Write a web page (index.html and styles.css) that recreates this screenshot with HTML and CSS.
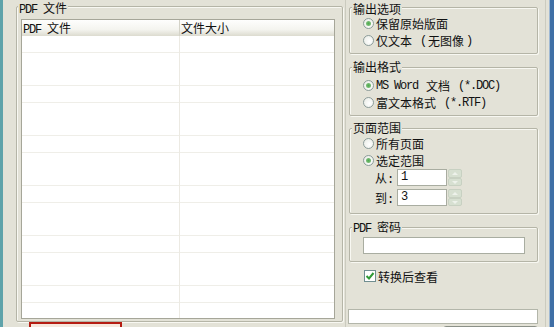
FILE: index.html
```html
<!DOCTYPE html>
<html lang="zh-CN">
<head>
  <meta charset="UTF-8">
  <link rel="stylesheet" href="styles.css">
  <title>PDF 转换</title>
</head>
<body>
  <div class="window">
    <div class="edge-left"></div>

    <div class="left-pane">
      <div class="group group-files">
        <div class="group-title"><span class="en">PDF </span>文件</div>
        <div class="listview">
          <div class="list-header">
            <div class="col col-name"><span class="en">PDF </span>文件</div>
            <div class="col col-size">文件大小</div>
          </div>
          <div class="list-body">
            <div class="col col-name"></div>
            <div class="col col-size"></div>
          </div>
        </div>
      </div>
      <div class="convert-btn"></div>
    </div>

    <div class="right-pane">
      <div class="group opt-group g-output">
        <div class="group-title">输出选项</div>
        <div class="radio-list">
          <div class="radio-row"><span class="radio checked"></span>保留原始版面</div>
          <div class="radio-row"><span class="radio"></span>仅文本<span class="en"> (</span>无图像<span class="en">)</span></div>
        </div>
      </div>

      <div class="group opt-group g-format">
        <div class="group-title">输出格式</div>
        <div class="radio-list">
          <div class="radio-row"><span class="radio checked"></span><span class="en">MS Word </span>文档<span class="en"> (*.DOC)</span></div>
          <div class="radio-row"><span class="radio"></span>富文本格式<span class="en"> (*.RTF)</span></div>
        </div>
      </div>

      <div class="group opt-group g-range">
        <div class="group-title">页面范围</div>
        <div class="radio-list">
          <div class="radio-row"><span class="radio"></span>所有页面</div>
          <div class="radio-row"><span class="radio checked"></span>选定范围</div>
        </div>
        <div class="range-row">
          <span class="range-label">从<span class="en">:</span></span>
          <div class="num-input">1</div>
          <div class="spin"><span class="up"></span><span class="down"></span></div>
        </div>
        <div class="range-row">
          <span class="range-label">到<span class="en">:</span></span>
          <div class="num-input">3</div>
          <div class="spin"><span class="up"></span><span class="down"></span></div>
        </div>
      </div>

      <div class="group opt-group g-password">
        <div class="group-title"><span class="en">PDF </span>密码</div>
        <div class="text-input"></div>
      </div>

      <div class="check-row">
        <span class="checkbox">
          <svg width="10" height="10" viewBox="0 0 10 10"><path d="M1.5 5 L4 7.5 L8.5 2" fill="none" stroke="#2f9a35" stroke-width="2"/></svg>
        </span>转换后查看
      </div>

      <div class="status-input"></div>
      <div class="action-btn"></div>
    </div>

    <div class="edge-right"></div>
  </div>
</body>
</html>
```

FILE: styles.css
```css
body {
  margin: 0;
  background: #e3e2d7;
  font-family: "Noto Sans CJK SC", sans-serif;
  font-size: 12px;
  color: #111;
}

.en {
  font-family: "Liberation Mono", "Noto Sans CJK SC", monospace;
  font-size: 12px;
  letter-spacing: -1.2px;
  white-space: pre;
}

.window {
  display: flex;
  height: 327px;
  overflow: hidden;
}

.edge-left {
  width: 3px;
  background: #5fa3aa;
}

.edge-right {
  width: 8px;
  background: linear-gradient(to right, #e3e2d7 0, #e3e2d7 3px, #9fb9d4 3px, #9fb9d4 4px, #3f6fa6 4px);
}

/* group boxes */
.group {
  flex-shrink: 0;
  border: 1px solid #b5b5a7;
  border-radius: 2px;
  box-shadow: inset 1px 1px 0 #f8f8f2, 1px 1px 0 #f8f8f2;
  box-sizing: border-box;
}

.group-title {
  width: max-content;
  margin-top: -7px;
  padding: 0 1px;
  line-height: 12px;
  background: #e3e2d7;
}

/* left side: file list */
.left-pane {
  width: 342px;
  padding: 6px 2px 0 13px;
  box-sizing: border-box;
}

.group-files {
  height: 316px;
  display: flex;
  flex-direction: column;
  padding: 0 7px 2px 4px;
}

.group-files .group-title {
  margin: -5px 0 0 -3px;
}

.listview {
  flex: 1;
  margin-top: 3px;
  border: 1px solid #a6a699;
  background: #fff;
  display: flex;
  flex-direction: column;
}

.list-header {
  display: flex;
  height: 16px;
  background: linear-gradient(#fefefd, #f4f4ef 60%, #dcdbcf);
}

.list-header .col {
  line-height: 16px;
  padding-left: 1px;
}

.list-header .col-name {
  border-right-color: #d4d3c8;
}

.col-name {
  width: 158px;
  box-sizing: border-box;
  border-right: 1px solid #eceae3;
}

.col-size {
  flex: 1;
}

.list-body {
  flex: 1;
  display: flex;
  background: repeating-linear-gradient(#fff 0, #fff 16px, #efeee8 16px, #efeee8 16.67px);
}

.convert-btn {
  width: 93px;
  height: 20px;
  margin: 0 0 0 13px;
  border: 2px solid #b51c12;
  background: #f6e8de;
  box-sizing: border-box;
}

/* right side: options */
.right-pane {
  width: 201px;
  border-left: 1px solid #cbcbbf;
  border-right: 1px solid #cbcbbf;
  padding: 0 7px 0 3px;
  box-sizing: border-box;
  display: flex;
  flex-direction: column;
}

.right-pane > div {
  flex-shrink: 0;
}

.opt-group {
  padding: 0 0 4px 13px;
}

.opt-group .group-title {
  margin-left: -11px;
}

.g-output {
  margin-top: 7px;
}

.g-output .group-title {
  margin-top: -5px;
}

.g-output .radio-list {
  margin-top: 0;
}

.g-format {
  margin-top: 13px;
}

.g-format .radio-list {
  margin-top: 4px;
}

.g-range {
  margin-top: 12px;
  padding-bottom: 7px;
}

.g-range .radio-list {
  margin-top: 1px;
}

.radio-row {
  display: flex;
  align-items: center;
  gap: 2px;
  height: 17px;
}

.radio {
  position: relative;
  width: 11px;
  height: 11px;
  border: 1px solid #8c9c9a;
  border-radius: 50%;
  background: radial-gradient(circle at 60% 60%, #fff, #e6e9e2);
  box-sizing: border-box;
}

.radio.checked::after {
  content: "";
  position: absolute;
  left: 2px;
  top: 2px;
  width: 5px;
  height: 5px;
  border-radius: 50%;
  background: radial-gradient(#4faa4f, #8fc48a);
}

.range-row {
  display: flex;
  align-items: center;
  height: 17px;
  margin-left: 12px;
}

.range-row + .range-row {
  margin-top: 3px;
}

.range-label {
  width: 22px;
}

.num-input {
  width: 50px;
  height: 17px;
  border: 1px solid #a9ada1;
  background: #fff;
  box-sizing: border-box;
  padding-left: 3px;
  line-height: 15px;
  font-family: "Liberation Mono", monospace;
  font-size: 12px;
}

.spin {
  width: 14px;
  height: 17px;
  margin-left: 1px;
  display: flex;
  flex-direction: column;
}

.spin span {
  flex: 1;
  position: relative;
  background: #d7e0d1;
  border: 1px solid #c8d1c2;
  border-radius: 2px;
}

.spin span::after {
  content: "";
  position: absolute;
  left: 3px;
  top: 2px;
  border-left: 3px solid transparent;
  border-right: 3px solid transparent;
}

.spin .up::after {
  border-bottom: 3px solid #eef2eb;
}

.spin .down::after {
  border-top: 3px solid #eef2eb;
}

.g-password {
  margin-top: 13px;
  padding-bottom: 7px;
}

.text-input {
  width: 162px;
  height: 17px;
  margin-top: 2px;
  border: 1px solid #a9ada1;
  background: #fff;
  box-sizing: border-box;
}

.check-row {
  display: flex;
  align-items: center;
  gap: 2px;
  height: 14px;
  margin: 7px 0 0 15px;
}

.checkbox {
  display: flex;
  align-items: center;
  justify-content: center;
  width: 12px;
  height: 12px;
  border: 1px solid #708e90;
  background: #fff;
  box-sizing: border-box;
}

.status-input {
  width: 190px;
  height: 15px;
  margin: 26px 0 0 -1px;
  border: 1px solid #b3b6aa;
  background: #fff;
  box-sizing: border-box;
}

.action-btn {
  width: 95px;
  height: 20px;
  margin: 2px 0 0 94px;
  border: 1px solid #8c9188;
  border-radius: 3px;
  background: #f4f4ee;
  box-sizing: border-box;
}
```
